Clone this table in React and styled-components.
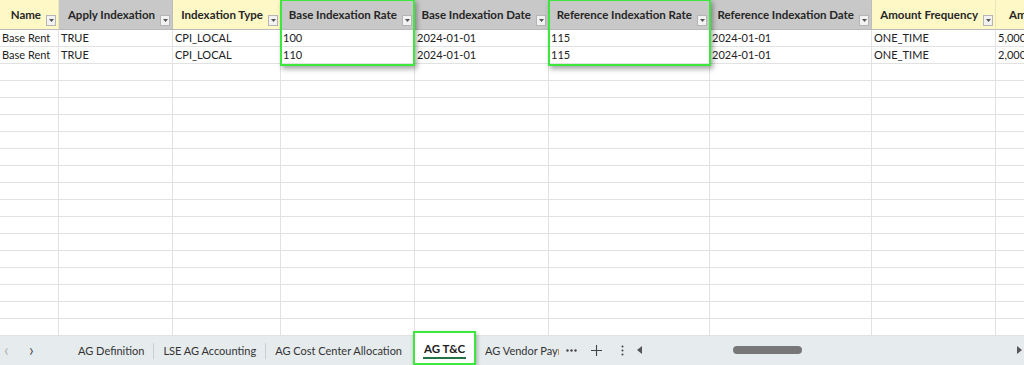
import React from 'react'
import styled, { createGlobalStyle } from 'styled-components'

const GlobalStyle = createGlobalStyle`
  html, body { margin: 0; padding: 0; background: #fff; }
  body { font-family: Lato, "Open Sans", sans-serif; overflow: hidden; }
`;

const columns = [
  { title: 'Name', width: 59, tone: 'yellow' },
  { title: 'Apply Indexation', width: 114, tone: 'gray' },
  { title: 'Indexation Type', width: 108, tone: 'yellow' },
  { title: 'Base Indexation Rate', width: 134, tone: 'gray' },
  { title: 'Base Indexation Date', width: 134, tone: 'gray' },
  { title: 'Reference Indexation Rate', width: 161, tone: 'gray' },
  { title: 'Reference Indexation Date', width: 162, tone: 'gray' },
  { title: 'Amount Frequency', width: 124, tone: 'yellow' },
  { title: 'Am', width: 60, tone: 'yellow', cut: true },
];

const rows = [
  ['Base Rent', 'TRUE', 'CPI_LOCAL', '100', '2024-01-01', '115', '2024-01-01', 'ONE_TIME', '5,000'],
  ['Base Rent', 'TRUE', 'CPI_LOCAL', '110', '2024-01-01', '115', '2024-01-01', 'ONE_TIME', '2,000'],
];

const EMPTY_ROWS = 16;

function App() {
  const template = columns.map(c => `${c.width}px`).join(' ');
  const allRows = [...rows, ...Array.from({ length: EMPTY_ROWS }, () => columns.map(() => ''))];

  return (
    <Page>
      <GlobalStyle />
      <Sheet>
        <Grid $cols={template}>
          {columns.map((c, i) => (
            <HeadCell key={i} $tone={c.tone} $cut={c.cut}>
              <HeadText>{c.title}</HeadText>
              {!c.cut && (
                <FilterBtn>
                  <svg width="5" height="3" viewBox="0 0 5 3"><path d="M0 0h5L2.5 3z" fill="#555" /></svg>
                </FilterBtn>
              )}
            </HeadCell>
          ))}
          {allRows.map((r, ri) =>
            r.map((v, ci) => <Cell key={`${ri}-${ci}`}>{v}</Cell>)
          )}
        </Grid>
        <Highlight $left={280} $width={135} />
        <Highlight $left={548} $width={163} />
      </Sheet>

      <TabBar>
        <NavArrow $muted>‹</NavArrow>
        <NavArrow>›</NavArrow>
        <Tabs>
          <Tab>AG Definition</Tab>
          <Divider />
          <Tab>LSE AG Accounting</Tab>
          <Divider />
          <Tab>AG Cost Center Allocation</Tab>
          <ActiveTab>AG T&amp;C</ActiveTab>
          <Tab $cut>AG Vendor Payments</Tab>
          <Tool $w={24}>
            <svg width="11" height="3" viewBox="0 0 11 3"><circle cx="1.5" cy="1.5" r="1.2" fill="#444" /><circle cx="5.5" cy="1.5" r="1.2" fill="#444" /><circle cx="9.5" cy="1.5" r="1.2" fill="#444" /></svg>
          </Tool>
          <Tool $w={26}>
            <svg width="11" height="11" viewBox="0 0 11 11"><path d="M5.5 0v11M0 5.5h11" stroke="#444" strokeWidth="1.1" /></svg>
          </Tool>
          <Tool $w={26}>
            <svg width="3" height="11" viewBox="0 0 3 11"><circle cx="1.5" cy="1.5" r="1" fill="#444" /><circle cx="1.5" cy="5.5" r="1" fill="#444" /><circle cx="1.5" cy="9.5" r="1" fill="#444" /></svg>
          </Tool>
        </Tabs>
        <Scroll>
          <svg width="5" height="8" viewBox="0 0 5 8"><path d="M5 0v8L0 4z" fill="#555" /></svg>
          <Track>
            <Thumb />
          </Track>
          <svg width="5" height="8" viewBox="0 0 5 8"><path d="M0 0v8l5-4z" fill="#555" /></svg>
        </Scroll>
      </TabBar>
    </Page>
  );
}

const Page = styled.div`
  width: 1024px;
  height: 365px;
  display: flex;
  flex-direction: column;
  overflow: hidden;
`;

const Sheet = styled.div`
  position: relative;
  height: 336px;
  overflow: hidden;
`;

const Grid = styled.div`
  display: grid;
  grid-template-columns: ${p => p.$cols};
  grid-template-rows: 30px;
  grid-auto-rows: 17px;
`;

const HeadCell = styled.div`
  background: ${p => (p.$tone === 'yellow' ? '#fdf8c6' : '#c8c8c8')};
  display: flex;
  align-items: center;
  justify-content: ${p => (p.$cut ? 'flex-start' : 'flex-end')};
  padding: ${p => (p.$cut ? '0 0 0 13px' : '0 2px 0 0')};
  border-right: 1px solid ${p => (p.$tone === 'yellow' ? '#ece6b8' : '#bdbdbd')};
  border-bottom: 1px solid #b9b9b9;
  box-sizing: border-box;
  position: relative;
  white-space: nowrap;
  overflow: hidden;
`;

const HeadText = styled.span`
  font-family: Lato, sans-serif;
  font-weight: 700;
  font-size: 11.5px;
  color: #262626;
  margin-right: 5px;
  margin-bottom: 1px;
`;

const FilterBtn = styled.span`
  width: 10px;
  height: 11px;
  margin-top: 11px;
  border: 1px solid #b5b5b5;
  background: #f2f2f2;
  box-sizing: border-box;
  display: flex;
  align-items: center;
  justify-content: center;
  flex: none;
`;

const Cell = styled.div`
  border-right: 1px solid #e2e2e2;
  border-bottom: 1px solid #e2e2e2;
  box-sizing: border-box;
  font-family: Lato, sans-serif;
  font-size: 11px;
  color: #222;
  padding-left: 2px;
  line-height: 16px;
  white-space: nowrap;
  overflow: hidden;
`;

const Highlight = styled.div`
  position: absolute;
  top: -1px;
  left: ${p => p.$left}px;
  width: ${p => p.$width}px;
  height: 67px;
  border: 2px solid #3ce83c;
  box-sizing: border-box;
  box-shadow: 2px 3px 5px rgba(0, 0, 0, 0.35);
  pointer-events: none;
`;

const TabBar = styled.div`
  flex: 1;
  background: #e6ebee;
  display: flex;
  align-items: center;
  font-family: Lato, "Open Sans", sans-serif;
  font-size: 11px;
  color: #333;
`;

const NavArrow = styled.span`
  width: 25px;
  text-align: center;
  font-size: 17px;
  line-height: 1;
  margin-top: -3px;
  color: ${p => (p.$muted ? '#b0b4b8' : '#555')};
  &:first-child { margin-left: -6px; }
`;

const Tabs = styled.div`
  display: flex;
  align-items: center;
  height: 100%;
  margin-left: 25px;
`;

const Tab = styled.div`
  padding: 0 9px;
  white-space: nowrap;
  ${p => p.$cut && 'width: 74px; overflow: hidden; padding: 0; margin-left: 9px;'}
`;

const Divider = styled.span`
  width: 1px;
  height: 16px;
  background: #c9ced2;
`;

const ActiveTab = styled.div`
  position: relative;
  align-self: stretch;
  margin: -5px 0 0 2px;
  padding: 0 11px;
  background: #fff;
  display: flex;
  align-items: center;
  font-size: 11.5px;
  font-weight: 700;
  color: #222;
  white-space: nowrap;
  &::before {
    content: '';
    position: absolute;
    left: 10px;
    right: 10px;
    bottom: 6px;
    height: 2px;
    background: #217346;
  }
  &::after {
    content: '';
    position: absolute;
    inset: 0;
    border: 2px solid #3ce83c;
    box-shadow: 1px 2px 4px rgba(0, 0, 0, 0.3);
  }
`;

const Tool = styled.span`
  width: ${p => p.$w}px;
  display: flex;
  justify-content: center;
  align-items: center;
`;

const Scroll = styled.div`
  flex: 1;
  display: flex;
  align-items: center;
  padding: 0 2px 0 2px;
  margin-top: -2px;
`;

const Track = styled.div`
  flex: 1;
  display: flex;
  padding-left: 91px;
`;

const Thumb = styled.span`
  width: 69px;
  height: 8px;
  border-radius: 4px;
  background: #777;
`;

export default App;
